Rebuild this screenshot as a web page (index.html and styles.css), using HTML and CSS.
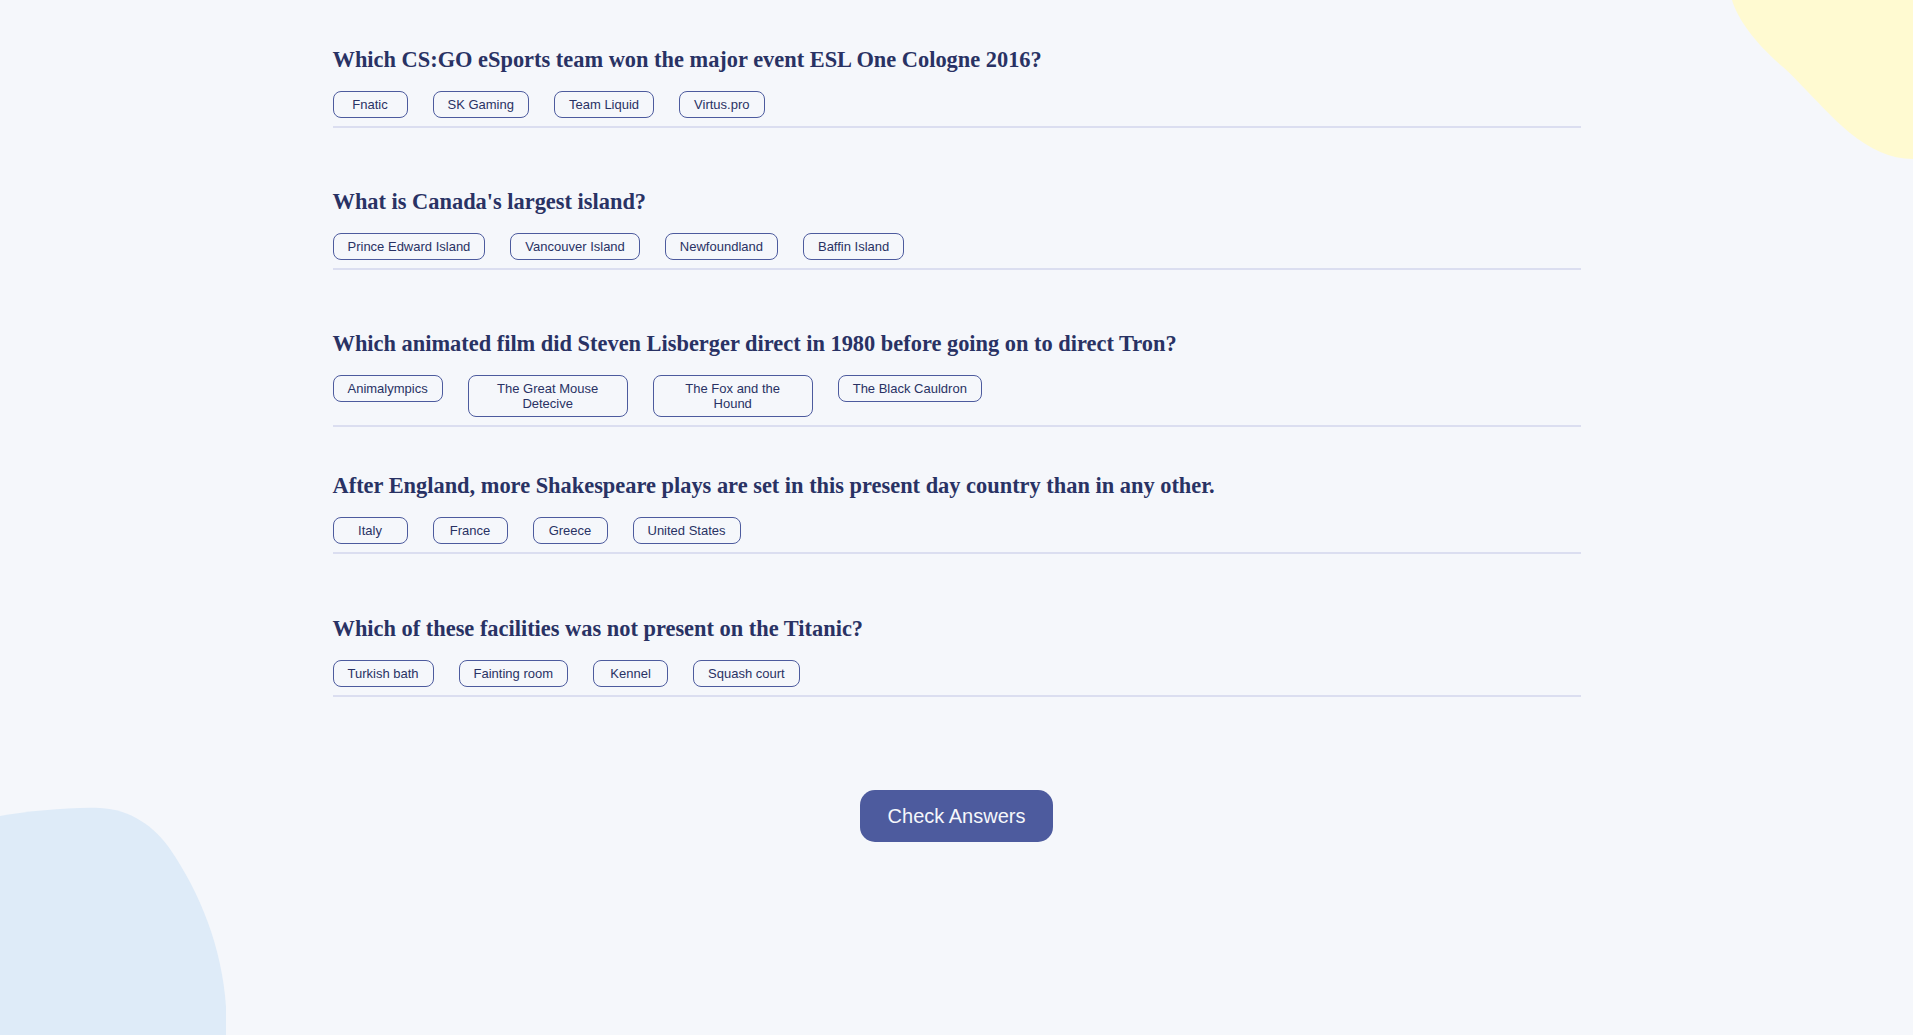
FILE: index.html
```html
<!DOCTYPE html>
<html lang="en">
<head>
<meta charset="utf-8">
<title>Quizzical</title>
<link rel="stylesheet" href="styles.css">
</head>
<body>
<svg class="blob blob-yellow" width="181" height="160" viewBox="0 0 181 160" aria-hidden="true">
  <path d="M0 0 C6 20 24 44 51 67 C68 82 95 114 118 133 C138 149 158 159 181 159 L181 0 Z" fill="#fffad1"/>
</svg>
<svg class="blob blob-blue" width="227" height="228" viewBox="0 0 227 228" aria-hidden="true">
  <path d="M0 9 C30 4 70 0 100 1 C130 2 155 20 170 42 C200 86 222 140 226 200 L226 228 L0 228 Z" fill="#deebf8"/>
</svg>
<main class="quiz">
  <section class="question">
    <div class="question-inner">
      <h2 class="question-title">Which CS:GO eSports team won the major event ESL One Cologne 2016?</h2>
      <div class="answers">
        <button class="answer">Fnatic</button>
        <button class="answer">SK Gaming</button>
        <button class="answer">Team Liquid</button>
        <button class="answer">Virtus.pro</button>
      </div>
    </div>
  </section>
  <section class="question">
    <div class="question-inner">
      <h2 class="question-title">What is Canada's largest island?</h2>
      <div class="answers">
        <button class="answer">Prince Edward Island</button>
        <button class="answer">Vancouver Island</button>
        <button class="answer">Newfoundland</button>
        <button class="answer">Baffin Island</button>
      </div>
    </div>
  </section>
  <section class="question">
    <div class="question-inner">
      <h2 class="question-title">Which animated film did Steven Lisberger direct in 1980 before going on to direct Tron?</h2>
      <div class="answers">
        <button class="answer">Animalympics</button>
        <button class="answer">The Great Mouse Detecive</button>
        <button class="answer">The Fox and the Hound</button>
        <button class="answer">The Black Cauldron</button>
      </div>
    </div>
  </section>
  <section class="question">
    <div class="question-inner">
      <h2 class="question-title">After England, more Shakespeare plays are set in this present day country than in any other.</h2>
      <div class="answers">
        <button class="answer">Italy</button>
        <button class="answer">France</button>
        <button class="answer">Greece</button>
        <button class="answer">United States</button>
      </div>
    </div>
  </section>
  <section class="question">
    <div class="question-inner">
      <h2 class="question-title">Which of these facilities was not present on the Titanic?</h2>
      <div class="answers">
        <button class="answer">Turkish bath</button>
        <button class="answer">Fainting room</button>
        <button class="answer">Kennel</button>
        <button class="answer">Squash court</button>
      </div>
    </div>
  </section>
  <div class="actions">
    <button class="check-btn">Check Answers</button>
  </div>
</main>
</body>
</html>
```

FILE: styles.css
```css
* {
  box-sizing: border-box;
}

html, body {
  margin: 0;
  padding: 0;
}

body {
  background: #f5f7fb;
  height: 100vh;
  overflow: hidden;
  position: relative;
  font-family: "Liberation Sans", Arial, sans-serif;
  color: #293264;
}

.blob {
  position: absolute;
  display: block;
}

.blob-yellow {
  top: 0;
  right: 0;
}

.blob-blue {
  left: 0;
  bottom: 0;
}

.quiz {
  position: relative;
  width: 1248px;
  margin: 0 auto;
  padding-top: 45.5px;
}

.question {
  height: 142.3px;
}

.question-inner {
  border-bottom: 2px solid #dbdef0;
  padding-bottom: 8px;
}

.question-title {
  margin: 0 0 18px;
  font-family: "Liberation Serif", "Times New Roman", serif;
  font-weight: 700;
  font-size: 22.4px;
  line-height: 27px;
  color: #293264;
}

.answers {
  display: flex;
  align-items: flex-start;
  gap: 25px;
}

.answer {
  font-family: "Liberation Sans", Arial, sans-serif;
  font-size: 13px;
  line-height: 15px;
  color: #293264;
  background: transparent;
  border: 1px solid #4d5b9e;
  border-radius: 8px;
  padding: 5px 14px;
  min-width: 75px;
  max-width: 160px;
  text-align: center;
  cursor: pointer;
}

.actions {
  display: flex;
  justify-content: center;
  padding-top: 33px;
}

.check-btn {
  font-family: "Liberation Sans", Arial, sans-serif;
  font-size: 20px;
  line-height: 24px;
  color: #f5f7fb;
  background: #4d5b9e;
  border: none;
  border-radius: 15px;
  padding: 14px 28px;
  cursor: pointer;
}
```
